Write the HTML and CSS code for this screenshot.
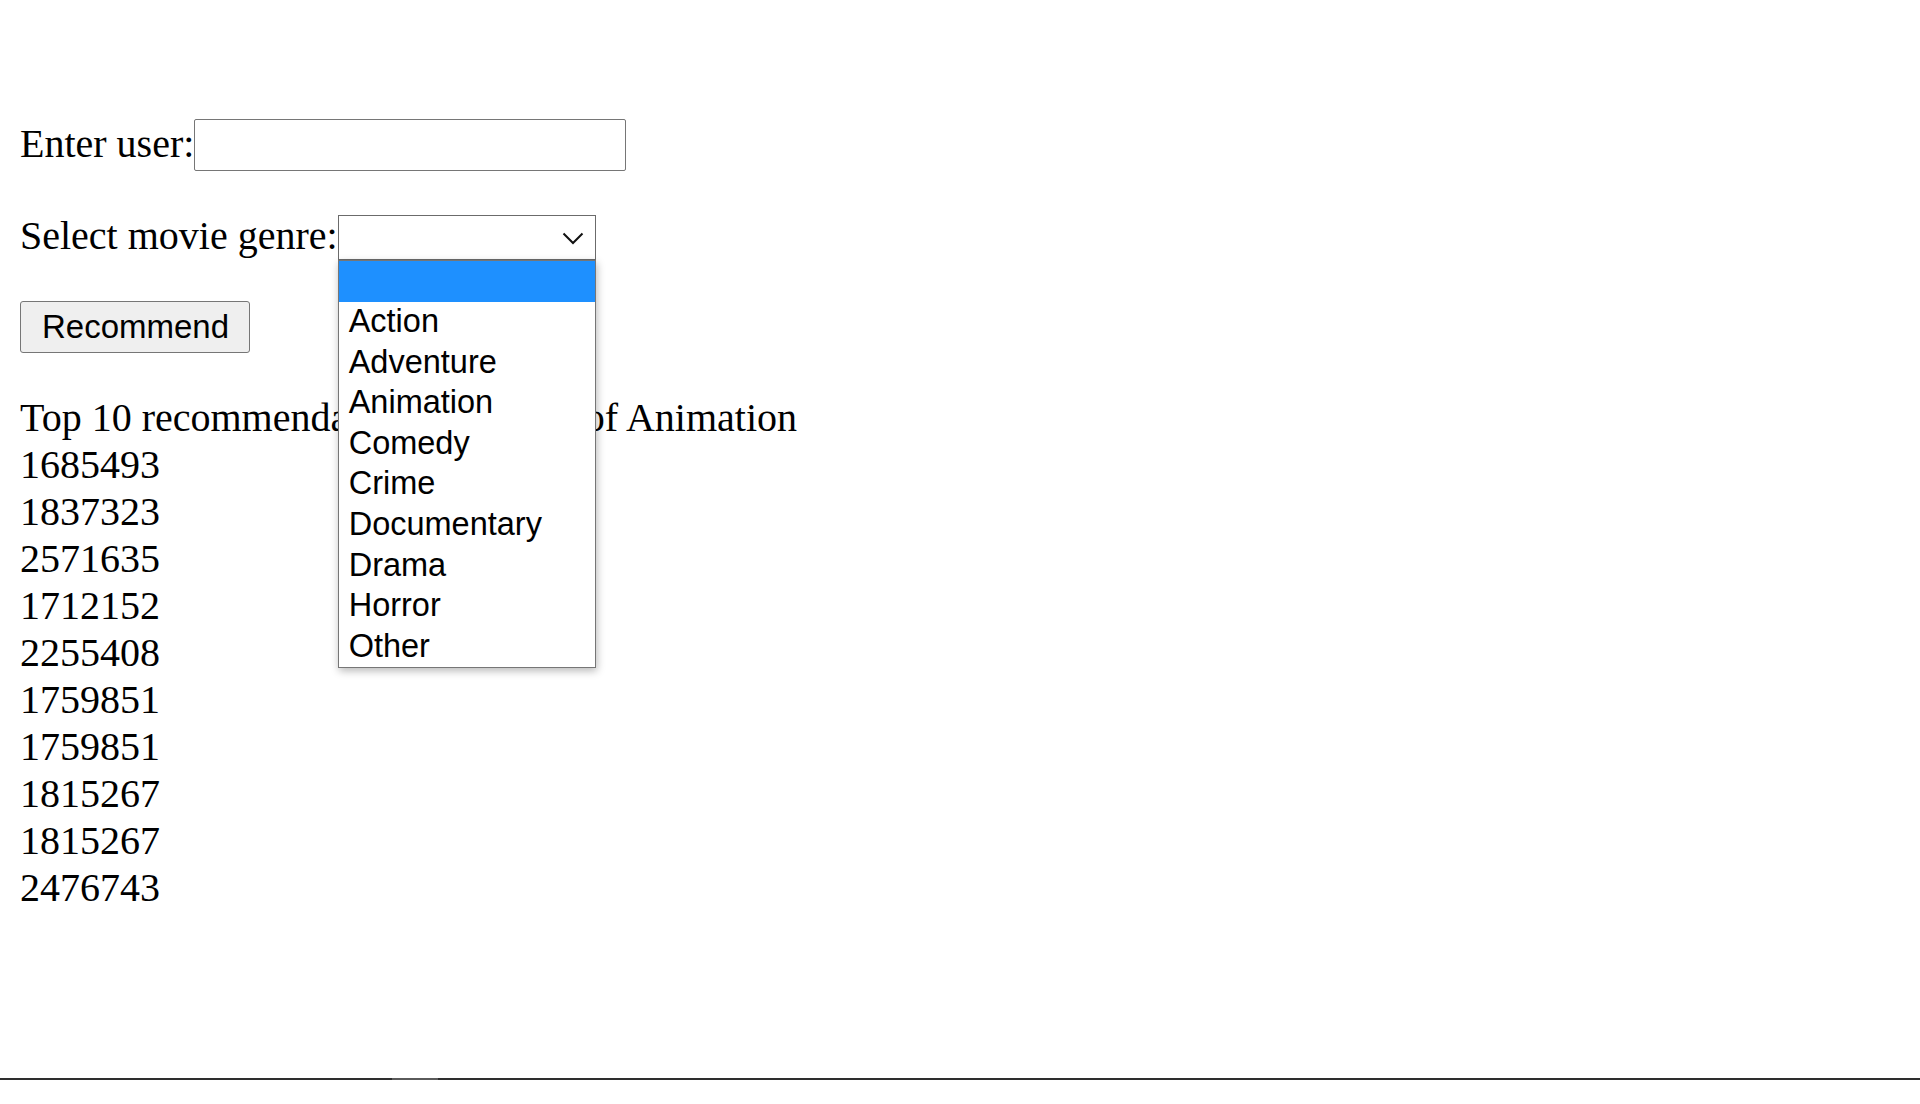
FILE: index.html
```html
<!DOCTYPE html>
<html lang="en">
<head>
<meta charset="utf-8">
<title>Movie recommender</title>
<link rel="stylesheet" href="styles.css">
</head>
<body>
<div class="screen">
  <main class="page">
    <form class="form">
      <div class="row row-user">
        <label class="label" for="user">Enter user:</label>
        <input class="text-input" id="user" type="text">
      </div>
      <div class="row row-genre">
        <label class="label">Select movie genre:</label>
        <div class="select-box">
          <svg class="chevron" width="22" height="13" viewBox="0 0 22 13" aria-hidden="true">
            <polyline points="1.5,1.5 11,11 20.5,1.5" fill="none" stroke="#111" stroke-width="2"/>
          </svg>
          <ul class="dropdown">
            <li class="option option-selected">&nbsp;</li>
            <li class="option">Action</li>
            <li class="option">Adventure</li>
            <li class="option">Animation</li>
            <li class="option">Comedy</li>
            <li class="option">Crime</li>
            <li class="option">Documentary</li>
            <li class="option">Drama</li>
            <li class="option">Horror</li>
            <li class="option">Other</li>
          </ul>
        </div>
      </div>
      <div class="row row-button">
        <button class="button" type="button">Recommend</button>
      </div>
    </form>
    <div class="results">
      <div class="results-title">Top 10 recommendations by genre of Animation</div>
      <div class="result">1685493</div>
      <div class="result">1837323</div>
      <div class="result">2571635</div>
      <div class="result">1712152</div>
      <div class="result">2255408</div>
      <div class="result">1759851</div>
      <div class="result">1759851</div>
      <div class="result">1815267</div>
      <div class="result">1815267</div>
      <div class="result">2476743</div>
    </div>
  </main>
  <div class="bottom-rule"><span class="rule-mark"></span></div>
  <div class="bottom-space"></div>
</div>
</body>
</html>
```
FILE: styles.css
```css
html, body {
  margin: 0;
  padding: 0;
  background: #ffffff;
}

body {
  font-family: "Liberation Serif", "Times New Roman", serif;
  font-size: 40px;
  line-height: 47px;
  color: #000000;
}

.screen {
  display: grid;
  grid-template-rows: 1078px 2px 1fr;
  height: 100vh;
  overflow: hidden;
}

.page {
  padding: 119px 20px 0 20px;
  overflow: hidden;
}

.form {
  margin: 0;
}

.row {
  display: flex;
}

.row-user {
  align-items: flex-start;
  height: 52px;
}

.row-user .label {
  margin-top: 1px;
}

.row-genre {
  margin-top: 41px;
  align-items: flex-start;
}

.row-button {
  margin-top: 41px;
}

.label {
  white-space: nowrap;
}

.text-input {
  box-sizing: border-box;
  width: 432px;
  height: 52px;
  margin: 0;
  padding: 0 5px;
  border: 1px solid #767676;
  border-radius: 2px;
  background: #ffffff;
  font-family: "Liberation Sans", Arial, sans-serif;
  font-size: 33px;
}

.select-box {
  position: relative;
  box-sizing: border-box;
  width: 258px;
  height: 45px;
  margin-top: 3px;
  border: 1px solid #6b6b6b;
  background: #ffffff;
  display: flex;
  justify-content: flex-end;
  align-items: flex-start;
}

.chevron {
  display: block;
  margin-top: 16px;
  margin-right: 11px;
}

.dropdown {
  position: absolute;
  top: calc(100% + 1px);
  left: -1px;
  box-sizing: border-box;
  width: 258px;
  margin: 0;
  padding: 0;
  list-style: none;
  border: 1px solid #767676;
  background: #ffffff;
  box-shadow: 1px 3px 8px rgba(0, 0, 0, 0.28);
  z-index: 10;
}

.option {
  box-sizing: border-box;
  height: 40.6px;
  padding: 1.5px 0 0 10px;
  font-family: "Liberation Sans", Arial, sans-serif;
  font-size: 32.5px;
  line-height: 36px;
  color: #000000;
  white-space: nowrap;
}

.option-selected {
  background: #1e90ff;
}

.button {
  box-sizing: border-box;
  height: 52px;
  margin: 0;
  padding: 0 20px 0 21px;
  border: 1px solid #767676;
  border-radius: 3px;
  background: #efefef;
  color: #000000;
  font-family: "Liberation Sans", Arial, sans-serif;
  font-size: 33px;
  line-height: 36px;
}

.results {
  margin-top: 41px;
}

.results-title,
.result {
  white-space: nowrap;
}

.bottom-rule {
  display: flex;
  background: #2e2e2e;
}

.bottom-rule::before {
  content: "";
  flex: 0 0 392px;
}

.rule-mark {
  flex: 0 0 46px;
  background: #5a5a5a;
}

.bottom-space {
  background: #ffffff;
}
```
